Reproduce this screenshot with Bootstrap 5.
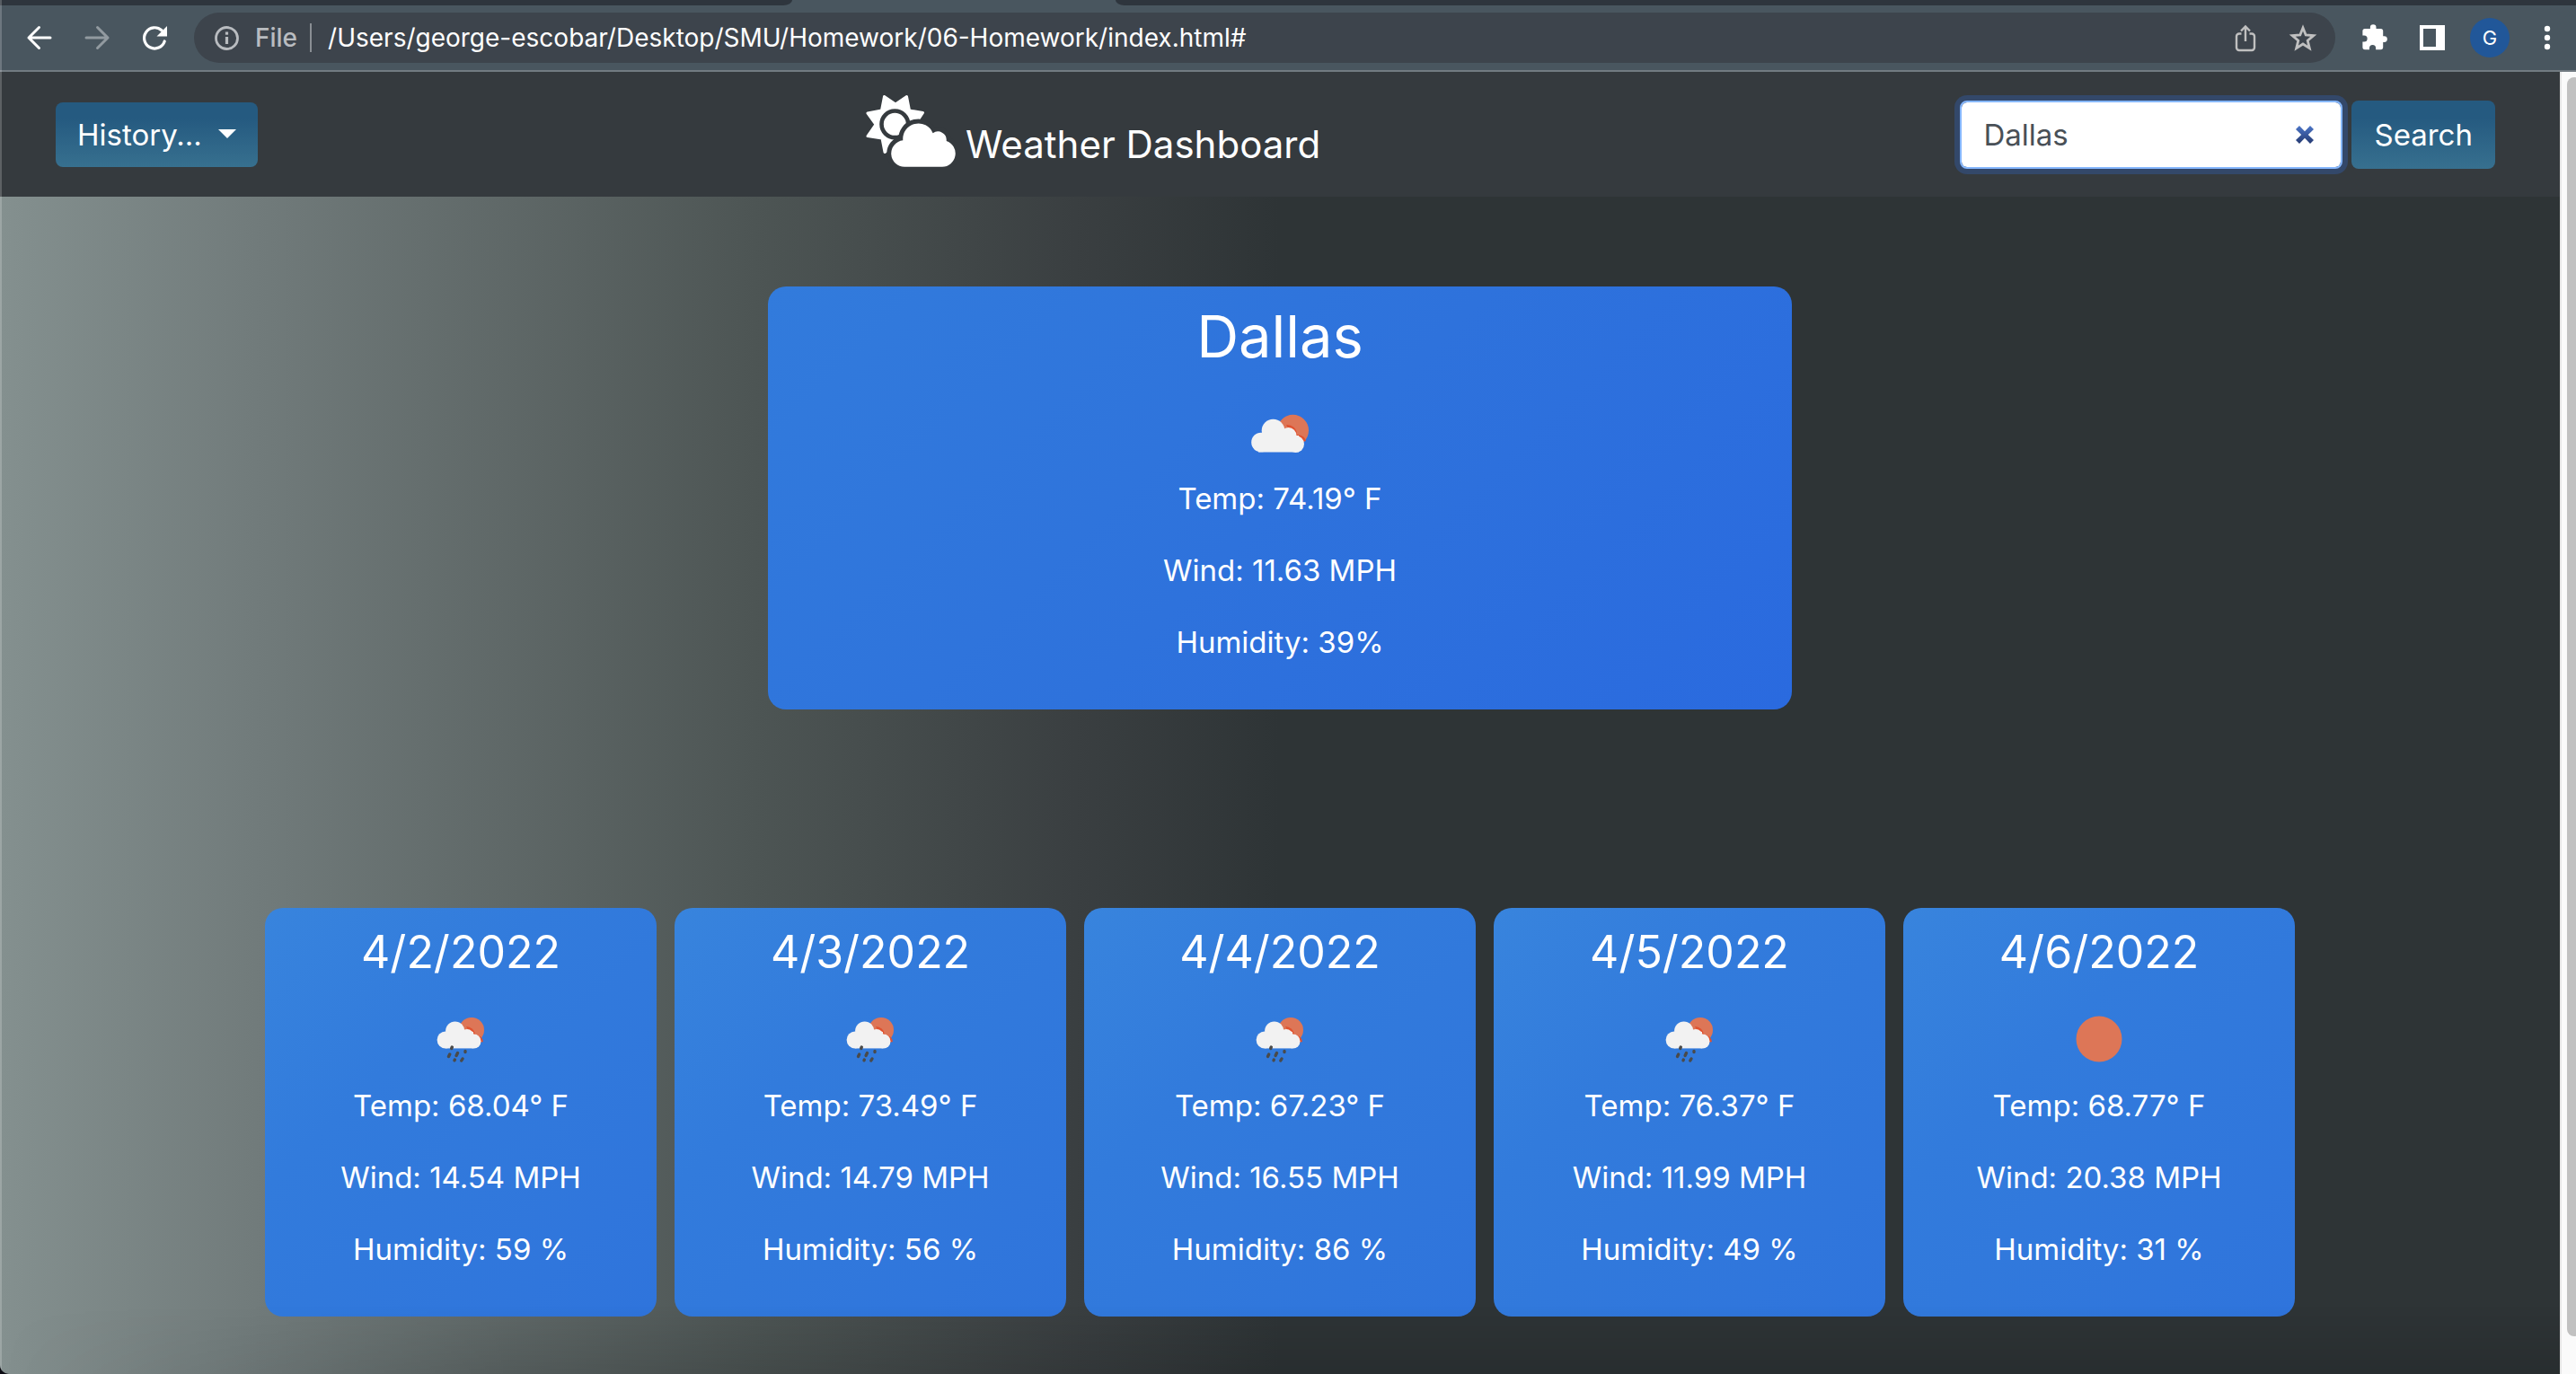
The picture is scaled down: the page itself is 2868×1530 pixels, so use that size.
<!DOCTYPE html>
<html lang="en">
<head>
<meta charset="utf-8">
<meta name="viewport" content="width=device-width, initial-scale=1">
<title>Weather Dashboard</title>
<link href="https://cdn.jsdelivr.net/npm/bootstrap@5.3.0/dist/css/bootstrap.min.css" rel="stylesheet">
<style>
body { font-family: Inter, "Liberation Sans", sans-serif; font-size: 33px; line-height: 48px; background: #0b0b12; color: #fff; }
.window-frame { position: relative; min-height: 100vh; overflow: hidden; border-bottom-left-radius: 10px; }
.window-frame::after { content: ""; position: absolute; inset: 0; border-left: 2px solid rgba(255,255,255,.2); pointer-events: none; }

/* browser chrome */
.tab-strip { height: 6px; background: #49565f; gap: 360px; }
.tab-strip div { background: #2e353d; }
.tab-before { flex: 882 1 0; border-bottom-right-radius: 10px 6px; }
.tab-after { flex: 1626 1 0; border-bottom-left-radius: 10px 6px; }
.toolbar { height: 74px; background: #49565f; border-bottom: 2px solid #727b82; }
.nav-tools { padding-left: 12px; }
.tool-btn { width: 64px; height: 56px; padding: 0; border: 0; background: none; color: #fff; display: flex; align-items: center; justify-content: center; }
.tool-btn svg, .omnibox svg { width: 32px; height: 32px; flex: none; }
.omnibox { height: 56px; border-radius: 28px; background: #3d444c; margin: 0 12px; padding: 0 4px 0 20px; color: #b9bcc0; font-size: 28px; line-height: 32px; }
.omnibox .tool-btn { color: #c0c0c0; }
.scheme-label { font-weight: 500; padding: 0 14px 0 16px; border-right: 2px solid #8a8f94; }
.address { background: none; border: 0; color: #fff; padding: 0 0 0 18px; min-width: 0; outline: 0; }
.avatar { width: 44px; height: 44px; border-radius: 50%; background: #215799; font-size: 22px; line-height: 44px; text-align: center; }

/* page */
.page-area { background: linear-gradient(to right, #84908f 0, #717b7b 20%, #4d5554 59%, #3a3f41 84%, #2e3436 100%) 0 0 / 50% 100% no-repeat #2e3436; position: relative; }
.page-area::after { content: ""; position: absolute; left: 0; right: 0; bottom: 0; height: 76px; background: linear-gradient(to top, rgba(0,0,0,.12), transparent); -webkit-mask-image: linear-gradient(to right, transparent, #000 20%); mask-image: linear-gradient(to right, transparent, #000 20%); pointer-events: none; }
.site-nav { background: #353a3e; min-height: 139px; padding: 0 72px 0 62px; }
.btn-sky { color: #fff; border: 0; border-radius: 8px; font-size: 33px; line-height: 48px; padding: 12px 24px; background: linear-gradient(#255a80 25%, #37708f); }
.btn-sky:hover { color: #fff; }
.btn-sky.dropdown-toggle::after { margin-left: 18px; vertical-align: 8px; border-top-width: 10px; border-left-width: 10px; border-right-width: 10px; }
.brand { font-size: 42px; line-height: 50px; gap: 10px; padding: 0 0 12px; margin: 0; }
.brand svg { width: 102px; height: 84px; }
.search-form { padding-left: 36px; gap: 10px; }
.search-form .form-control { width: 426px; height: 76px; font-size: 33px; line-height: 48px; padding: 12px 60px 12px 24px; color: #495057; border: 2px solid #86b7fe; border-radius: 8px; box-shadow: 0 0 0 6px #33486a; }
.search-form .btn-sky { padding: 14px 25px; }
.clear-btn { position: absolute; right: 30px; top: 26px; width: 24px; height: 24px; padding: 0; border: 0; background: none; display: flex; }
.forecast-card { background: linear-gradient(135deg, #3884dd, #327bdc 35%, #2f74dc); border-radius: 20px; padding: 18px 16px 19px; text-align: center; }
.today-card { width: 40%; margin: 100px auto 0; background: linear-gradient(135deg, #327bdc, #2e72dc 50%, #2a6adf); }
.forecast-card svg { width: 100px; height: 100px; display: block; margin: 0 auto; }
.forecast-card p { margin: 0 0 32px; }
.forecast-card h1 { font-size: 65px; line-height: 76px; font-weight: 400; margin: 0 0 18px; }
.forecast-card h2 { font-size: 50px; line-height: 62px; font-weight: 400; margin: 0 0 16px; }
.week { width: 2260px; max-width: 96%; margin: 221px auto 62px; display: grid; grid-template-columns: repeat(5, 1fr); gap: 20px; }

/* scroll track */
.scroll-track { width: 18px; background: #fafafa; border-left: 2px solid #e6e6e6; padding: 6px 0 42px 6px; flex: none; overflow: hidden; }
.scroll-thumb { width: 16px; height: 100%; border-radius: 8px; background: #c1c1c1; }
</style>
</head>
<body>
<svg width="0" height="0" class="position-absolute" aria-hidden="true">
  <symbol id="wx-rain" viewBox="0 0 100 100">
    <circle cx="62" cy="40" r="14" fill="#dd7657"/>
    <path d="M56 36a10 10 0 0 1 10 9q8 1 9 8l-9 2z" fill="#e0512f"/>
    <g fill="#f2f2f2"><circle cx="43.7" cy="41" r="10.6"/><circle cx="33" cy="51" r="9.4"/><circle cx="57" cy="46.500" r="7.500"/><circle cx="64.500" cy="52.500" r="8"/><rect x="33" y="42" width="31" height="18.400"/></g>
    <g stroke="#4a4a4a" stroke-width="3.400" stroke-linecap="round"><path d="M40.300 59l-.6 1.500M37.700 67l-1.200 2.500M46.500 65.500l-1.400 3M55 63.500v1M43.300 73l-.3.800M52 72l-1.200 2"/></g>
  </symbol>
</svg>
<div class="window-frame d-flex flex-column">
  <div class="tab-strip d-flex"><div class="tab-before"></div><div class="tab-after"></div></div>
  <div class="toolbar d-flex align-items-center">
    <div class="nav-tools d-flex">
      <button class="tool-btn" type="button" aria-label="Back"><svg viewBox="0 0 32 32" fill="none" stroke="#fff" stroke-width="3" stroke-linecap="round" stroke-linejoin="round"><path d="M28 16H4M15.500 4.500L4 16l11.500 11.500"/></svg></button>
      <button class="tool-btn" type="button" aria-label="Forward"><svg viewBox="0 0 32 32" fill="none" stroke="#929aa0" stroke-width="3" stroke-linecap="round" stroke-linejoin="round"><path d="M4 16h24M16.500 4.500L28 16 16.500 27.500"/></svg></button>
      <button class="tool-btn" type="button" aria-label="Reload"><svg viewBox="0 0 32 32"><path d="M27.200 20A11.600 11.600 0 1 1 24 7.800" fill="none" stroke="#fff" stroke-width="3.200" stroke-linecap="round"/><path d="M30 3v11.500H18.500z" fill="#fff"/></svg></button>
    </div>
    <div class="omnibox d-flex align-items-center flex-grow-1">
      <svg viewBox="0 0 32 32" fill="none" stroke="#b9bcc0" stroke-width="2.800"><circle cx="16.500" cy="16.500" r="12"/><path d="M16.500 15v8" stroke-width="3.200"/><path d="M16.500 9.500v3.200" stroke-width="3.200"/></svg>
      <label class="scheme-label" for="address">File</label>
      <input id="address" class="address flex-grow-1" type="text" value="/Users/george-escobar/Desktop/SMU/Homework/06-Homework/index.html#">
      <button class="tool-btn" type="button" aria-label="Share"><svg viewBox="0 0 32 32" fill="none" stroke="currentColor" stroke-width="2.400"><path d="M11.500 11.500H9a3 3 0 0 0-3 3V27a3 3 0 0 0 3 3h14a3 3 0 0 0 3-3V14.500a3 3 0 0 0-3-3h-2.500M16 20V4M11 8.500l5-5 5 5"/></svg></button>
      <button class="tool-btn" type="button" aria-label="Bookmark"><svg viewBox="0 0 32 32" fill="none" stroke="currentColor" stroke-width="2.800"><path d="M16 5l3.200 8 8.600.6-6.600 5.600 2.100 8.400L16 23l-7.300 4.600 2.100-8.400-6.600-5.600 8.600-.6z"/></svg></button>
    </div>
    <div class="d-flex">
      <button class="tool-btn" type="button" aria-label="Extensions"><svg viewBox="0 0 32 32" fill="#fff"><path d="M26.500 14.200h-1.300V8.600A2.600 2.600 0 0 0 22.600 6H17.500V4.500a3.300 3.300 0 0 0-6.600 0V6H5A2.600 2.600 0 0 0 2.400 8.600v4.900h1.700a3.500 3.500 0 0 1 0 7.100H2.400v6A2.600 2.600 0 0 0 5 29.200h5v-1.700a3.500 3.500 0 0 1 7.100 0v1.700h5.500a2.600 2.600 0 0 0 2.600-2.600v-5.700h1.300a3.350 3.350 0 0 0 0-6.700z"/></svg></button>
      <button class="tool-btn" type="button" aria-label="Side panel"><svg viewBox="0 0 32 32"><path fill="#fff" fill-rule="evenodd" d="M2 2h28v28H2zM6 6v20h14V6z"/></svg></button>
      <button class="tool-btn" type="button" aria-label="Profile"><span class="avatar">G</span></button>
      <button class="tool-btn" type="button" aria-label="Menu"><svg viewBox="0 0 32 32" fill="#fff"><circle cx="16" cy="6" r="3.200"/><circle cx="16" cy="16" r="3.200"/><circle cx="16" cy="26" r="3.200"/></svg></button>
    </div>
  </div>

  <div class="d-flex flex-grow-1">
    <div class="page-area flex-grow-1">
      <nav class="site-nav d-flex align-items-center justify-content-between">
        <div class="dropdown">
          <button class="btn btn-sky dropdown-toggle" type="button" data-bs-toggle="dropdown" aria-expanded="false">History...</button>
        </div>
        <div class="brand d-flex align-items-end">
          <svg viewBox="0 -3 102 84" aria-hidden="true">
            <path fill="#fff" stroke="#fff" stroke-width="3" stroke-linejoin="round" d="M21.500 2.500L34 11 46.500 2.500 49.500 18 64.500 20.500 56 33.500 64.500 47 49 49.500 46 64 34 56 22 64.500 19 49 3 46.500 12 33.500 3 21 18.500 18z"/>
            <circle cx="33.300" cy="33.300" r="14.800" fill="none" stroke="#353a3e" stroke-width="4.600"/>
            <path fill="#fff" stroke="#353a3e" stroke-width="10" d="M44 80.700a14.800 14.800 0 0 1-1.700-29.500A17.300 17.300 0 0 1 75.600 43.300 9.500 9.500 0 0 1 90.700 51.900 14.800 14.800 0 0 1 86 80.700z"/>
            <path fill="#fff" d="M44 80.700a14.800 14.800 0 0 1-1.700-29.500A17.300 17.300 0 0 1 75.600 43.300 9.500 9.500 0 0 1 90.700 51.900 14.800 14.800 0 0 1 86 80.700z"/>
          </svg>
          <span>Weather Dashboard</span>
        </div>
        <form class="search-form d-flex" onsubmit="return false">
          <div class="position-relative">
            <input class="form-control" type="text" value="Dallas" aria-label="City">
            <button class="clear-btn" type="button" aria-label="Clear"><svg viewBox="0 0 24 24" width="24" height="24"><defs><linearGradient id="clear-fade" x2="0" y2="1"><stop stop-color="#4c76c8"/><stop offset="1" stop-color="#253a72"/></linearGradient></defs><path d="M2 6l4-4 6 6.200L18 2l4 4-6.200 6 6.200 6-4 4-6-6.200L6 22l-4-4 6.200-6z" fill="url(#clear-fade)"/></svg></button>
          </div>
          <button class="btn btn-sky" type="submit">Search</button>
        </form>
      </nav>

      <main>
        <section class="forecast-card today-card">
          <h1>Dallas</h1>
          <svg viewBox="0 0 100 100" role="img" aria-label="Few clouds">
            <circle cx="64.500" cy="48.300" r="17.500" fill="#dd7657"/>
            <path d="M57 42a11 11 0 0 1 12 11q9 1 10 7l-10 3z" fill="#e0512f"/>
            <g fill="#f2f2f2"><circle cx="42.500" cy="48.500" r="12.800"/><circle cx="29" cy="61.500" r="10.800"/><circle cx="59.500" cy="54" r="9"/><circle cx="67.500" cy="63.500" r="9.500"/><rect x="26" y="54" width="45" height="18.500"/></g>
          </svg>
          <p>Temp: 74.19° F</p>
          <p>Wind: 11.63 MPH</p>
          <p>Humidity: 39%</p>
        </section>

        <section class="week">
          <article class="forecast-card">
            <h2>4/2/2022</h2>
            <svg role="img" aria-label="Rain"><use href="#wx-rain"/></svg>
            <p>Temp: 68.04° F</p><p>Wind: 14.54 MPH</p><p>Humidity: 59 %</p>
          </article>
          <article class="forecast-card">
            <h2>4/3/2022</h2>
            <svg role="img" aria-label="Rain"><use href="#wx-rain"/></svg>
            <p>Temp: 73.49° F</p><p>Wind: 14.79 MPH</p><p>Humidity: 56 %</p>
          </article>
          <article class="forecast-card">
            <h2>4/4/2022</h2>
            <svg role="img" aria-label="Rain"><use href="#wx-rain"/></svg>
            <p>Temp: 67.23° F</p><p>Wind: 16.55 MPH</p><p>Humidity: 86 %</p>
          </article>
          <article class="forecast-card">
            <h2>4/5/2022</h2>
            <svg role="img" aria-label="Rain"><use href="#wx-rain"/></svg>
            <p>Temp: 76.37° F</p><p>Wind: 11.99 MPH</p><p>Humidity: 49 %</p>
          </article>
          <article class="forecast-card">
            <h2>4/6/2022</h2>
            <svg viewBox="0 0 100 100" role="img" aria-label="Clear sky"><circle cx="50" cy="50" r="25.500" fill="#dd7657"/></svg>
            <p>Temp: 68.77° F</p><p>Wind: 20.38 MPH</p><p>Humidity: 31 %</p>
          </article>
        </section>
      </main>
    </div>
    <div class="scroll-track" aria-hidden="true"><div class="scroll-thumb"></div></div>
  </div>
</div>
<script src="https://cdn.jsdelivr.net/npm/bootstrap@5.3.0/dist/js/bootstrap.bundle.min.js"></script>
</body>
</html>
